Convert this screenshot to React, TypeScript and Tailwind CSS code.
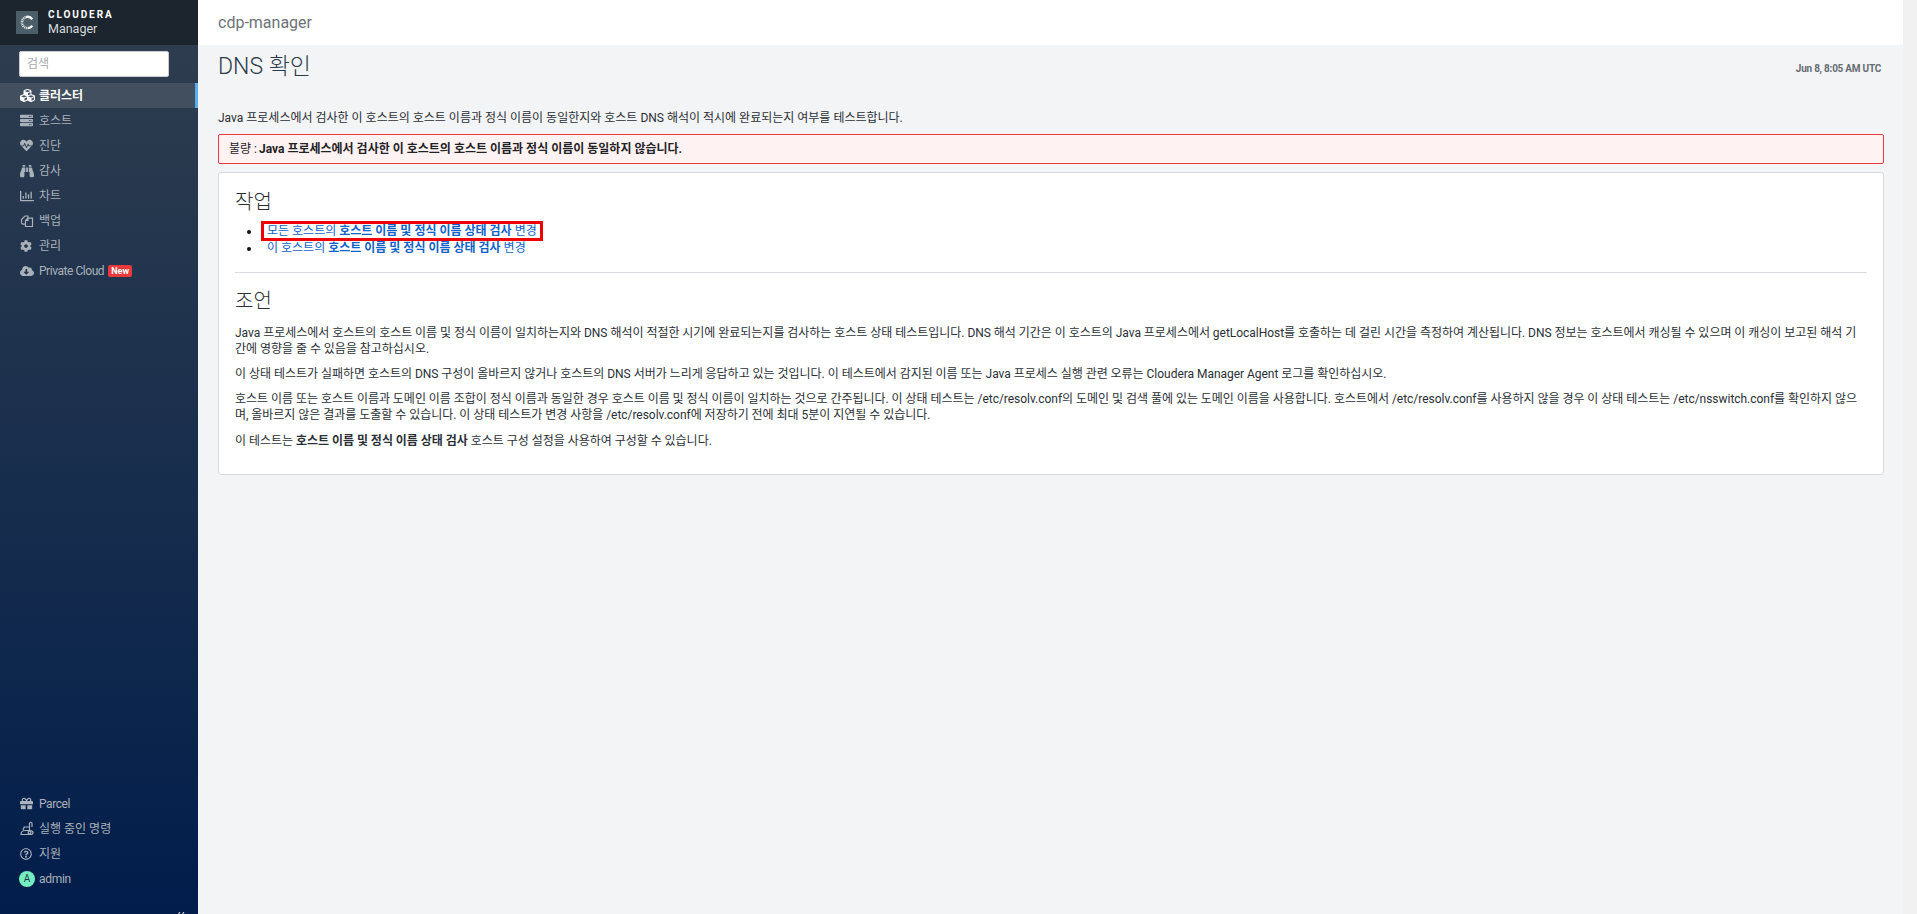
import { FaBinoculars, FaCloudDownloadAlt, FaCog, FaCubes, FaGift, FaHeartbeat, FaRegChartBar, FaRegQuestionCircle, FaServer } from "react-icons/fa";
import type { ReactNode } from "react";

const SANS = "font-['Roboto','Noto_Sans_CJK_KR',sans-serif]";

type NavItem = {
  label: string;
  icon: ReactNode;
  active?: boolean;
  badge?: string;
  latin?: boolean;
};

function BackupIcon() {
  return (
    <svg viewBox="0 0 14 14" className="h-[14px] w-[14px]" fill="none" stroke="currentColor" strokeWidth="1.2">
      <path d="M1.5 8.5V5.5L5 2h3v2" />
      <path d="M1.5 8.5c0 1 .7 1.6 1.6 1.6H5" />
      <path d="M5.5 6.5L8 4.2h4.5v8.3H5.5Z" />
      <path d="M5.5 6.5H8V4.2" />
    </svg>
  );
}

function CommandsIcon() {
  return (
    <svg viewBox="0 0 15 15" className="h-[15px] w-[15px]" fill="none" stroke="currentColor" strokeWidth="1.2">
      <path d="M3 9L4.2 6H10" />
      <path d="M1 13.5C1 11 3 9.5 5 9.5H10c1.8 0 3 1.2 3 2.2s-1.2 1.8-3 1.8Z" />
      <path d="M9.5 9V2.5A1.2 1.2 0 0 1 12 2.5V6" />
      <circle cx="9.5" cy="11.5" r="1.4" />
    </svg>
  );
}

const topNav: NavItem[] = [
  { label: "클러스터", icon: <FaCubes className="h-[15px] w-[15px]" />, active: true },
  { label: "호스트", icon: <FaServer className="h-[13px] w-[13px]" /> },
  { label: "진단", icon: <FaHeartbeat className="h-[13px] w-[13px]" /> },
  { label: "감사", icon: <FaBinoculars className="h-[14px] w-[14px]" /> },
  { label: "차트", icon: <FaRegChartBar className="h-[14px] w-[14px]" /> },
  { label: "백업", icon: <BackupIcon /> },
  { label: "관리", icon: <FaCog className="h-[12px] w-[12px]" /> },
  { label: "Private Cloud", icon: <FaCloudDownloadAlt className="h-[14px] w-[14px]" />, badge: "New", latin: true },
];

const bottomNav: NavItem[] = [
  { label: "Parcel", icon: <FaGift className="h-[13px] w-[13px]" />, latin: true },
  { label: "실행 중인 명령", icon: <CommandsIcon /> },
  { label: "지원", icon: <FaRegQuestionCircle className="h-[12px] w-[12px]" /> },
];

function NavRow({ item }: { item: NavItem }) {
  return (
    <div
      className={
        item.active
          ? "flex h-[25px] items-center border-r-[3px] border-[#5aaeee] bg-[#424f5e] pl-[20px] font-bold text-white"
          : "flex h-[25px] items-center pl-[20px] text-[#a9b1bb]"
      }
    >
      <span className="flex w-[19px] shrink-0 items-center">{item.icon}</span>
      <span className={item.latin ? "text-[12px] tracking-[-0.45px]" : "text-[12px]"}>{item.label}</span>
      {item.badge && (
        <span className="ml-[4px] rounded-[2px] bg-[#e83a3a] px-[3px] text-[9px] leading-[12px] font-bold text-white">
          {item.badge}
        </span>
      )}
    </div>
  );
}

function Sidebar() {
  return (
    <aside className="flex h-[914px] w-[198px] shrink-0 flex-col bg-gradient-to-b from-[#303e4e] to-[#021d4b]">
      <div className="flex h-[45px] shrink-0 items-center bg-[#1c252d] pl-[16px]">
        <div className="flex h-[23px] w-[22px] items-center justify-center bg-[#4c5f68]">
          <svg viewBox="0 0 20 20" className="h-[17px] w-[17px]" fill="none">
            <path d="M15.6 6.2A6.6 6.6 0 0 0 8 3.6" stroke="#f0f3f4" strokeWidth="2.8" />
            <path d="M7.8 3.8A6.6 6.6 0 0 0 10 16.6" stroke="#dfe5e7" strokeWidth="3" strokeDasharray="1.2 0.8" />
            <path d="M10 16.6A6.6 6.6 0 0 0 15.6 13.6" stroke="#f0f3f4" strokeWidth="2.6" />
          </svg>
        </div>
        <div className="ml-[10px] flex flex-col">
          <span className="text-[10px] leading-[12px] font-bold tracking-[1.9px] text-white">CLOUDERA</span>
          <span className="text-[12.5px] leading-[15px] text-[#d5d9dc]">Manager</span>
        </div>
      </div>

      <div className="flex h-[38px] shrink-0 items-center pl-[19px]">
        <input
          readOnly
          placeholder="검색"
          className="h-[26px] w-[150px] rounded-[2px] border border-[#c9ccd0] bg-white px-[7px] text-[12px] placeholder:text-[#a5a9ad]"
        />
      </div>

      <nav className="flex flex-col">
        {topNav.map((item) => (
          <NavRow key={item.label} item={item} />
        ))}
      </nav>

      <nav className="mt-auto flex flex-col">
        {bottomNav.map((item) => (
          <NavRow key={item.label} item={item} />
        ))}
        <div className="flex h-[25px] items-center pl-[19px] text-[#a9b1bb]">
          <span className="flex h-[16px] w-[16px] items-center justify-center rounded-full bg-[#74edc1] text-[10px] text-[#2a3a4a]">
            A
          </span>
          <span className="ml-[4px] text-[12px] tracking-[-0.3px]">admin</span>
        </div>
      </nav>

      <div className="flex h-[23px] shrink-0 justify-end pt-[21px] pr-[13px]">
        <svg viewBox="0 0 8 2" className="h-[2px] w-[8px]" fill="none" stroke="#cfd4da" strokeWidth="1.2">
          <path d="M3 0L1.5 2M7 0L5.5 2" />
        </svg>
      </div>
    </aside>
  );
}

function Main() {
  return (
    <main className="flex h-[914px] min-w-0 flex-1 flex-col bg-[#f3f4f6] text-[12px] leading-[17px] text-[#2a2f35]">
      <header className="flex h-[45px] shrink-0 items-center bg-white pl-[20px] text-[16px] text-[#6d7278]">
        cdp-manager
      </header>

      <div className="flex-1 pr-[19px] pl-[20px]">
        <div className="flex items-start justify-between pt-[9px] pr-[3px]">
          <h1 className="text-[23px] leading-[26px] font-light text-[#2b3a4a]">DNS 확인</h1>
          <span className="pt-[9px] text-[10px] leading-[12px] font-bold tracking-[-0.25px] text-[#666c72]">Jun 8, 8:05 AM UTC</span>
        </div>

        <p className="mt-[30px]">Java 프로세스에서 검사한 이 호스트의 호스트 이름과 정식 이름이 동일한지와 호스트 DNS 해석이 적시에 완료되는지 여부를 테스트합니다.</p>

        <div className="mt-[7px] flex h-[30px] items-center rounded-[2px] border border-[#e93a3a] bg-[#fef2f2] pl-[10px] text-[#1f2226]">
          불량 : <b className="ml-[2px]">Java 프로세스에서 검사한 이 호스트의 호스트 이름과 정식 이름이 동일하지 않습니다.</b>
        </div>

        <section className="mt-[8px] h-[303px] rounded-[3px] border border-[#d6d9dd] bg-white px-[16px] pt-[16px]">
          <h2 className="text-[20px] leading-[26px] font-light text-[#2b2f33]">작업</h2>

          <ul className="mt-[8px] list-disc pl-[26px] text-[#111]">
            <li>
              <a className="-my-[2px] inline-block border-[3px] border-[#f00000] px-[3px] leading-[14px] text-[#0f62c8]">
                모든 호스트의 <b>호스트 이름 및 정식 이름 상태 검사</b> 변경
              </a>
            </li>
            <li>
              <a className="ml-[6px] text-[#0f62c8]">
                이 호스트의 <b>호스트 이름 및 정식 이름 상태 검사</b> 변경
              </a>
            </li>
          </ul>

          <hr className="mt-[15px] border-[#d9dbde]" />

          <h2 className="mt-[15px] text-[20px] leading-[26px] font-light text-[#2b2f33]">조언</h2>

          <div className="mt-[11px] flex flex-col gap-[9px] leading-[16px] tracking-[-0.03px]">
            <p>
              Java 프로세스에서 호스트의 호스트 이름 및 정식 이름이 일치하는지와 DNS 해석이 적절한 시기에 완료되는지를 검사하는 호스트 상태 테스트입니다. DNS 해석 기간은 이 호스트의 Java 프로세스에서 getLocalHost를 호출하는 데 걸린 시간을 측정하여 계산됩니다. DNS 정보는 호스트에서 캐싱될 수 있으며 이 캐싱이 보고된 해석 기간에 영향을 줄 수 있음을 참고하십시오.
            </p>
            <p>
              이 상태 테스트가 실패하면 호스트의 DNS 구성이 올바르지 않거나 호스트의 DNS 서버가 느리게 응답하고 있는 것입니다. 이 테스트에서 감지된 이름 또는 Java 프로세스 실행 관련 오류는 Cloudera Manager Agent 로그를 확인하십시오.
            </p>
            <p>
              호스트 이름 또는 호스트 이름과 도메인 이름 조합이 정식 이름과 동일한 경우 호스트 이름 및 정식 이름이 일치하는 것으로 간주됩니다. 이 상태 테스트는 /etc/resolv.conf의 도메인 및 검색 풀에 있는 도메인 이름을 사용합니다. 호스트에서 /etc/resolv.conf를 사용하지 않을 경우 이 상태 테스트는 /etc/nsswitch.conf를 확인하지 않으며, 올바르지 않은 결과를 도출할 수 있습니다. 이 상태 테스트가 변경 사항을 /etc/resolv.conf에 저장하기 전에 최대 5분이 지연될 수 있습니다.
            </p>
            <p className="mt-[1px]">
              이 테스트는 <b>호스트 이름 및 정식 이름 상태 검사</b> 호스트 구성 설정을 사용하여 구성할 수 있습니다.
            </p>
          </div>
        </section>
      </div>
    </main>
  );
}

export default function App() {
  return (
    <div className={`flex h-[914px] w-full overflow-hidden ${SANS}`}>
      <Sidebar />
      <Main />
      <div className="h-[914px] w-[14px] shrink-0 bg-[#f1f1f1]" />
    </div>
  );
}
